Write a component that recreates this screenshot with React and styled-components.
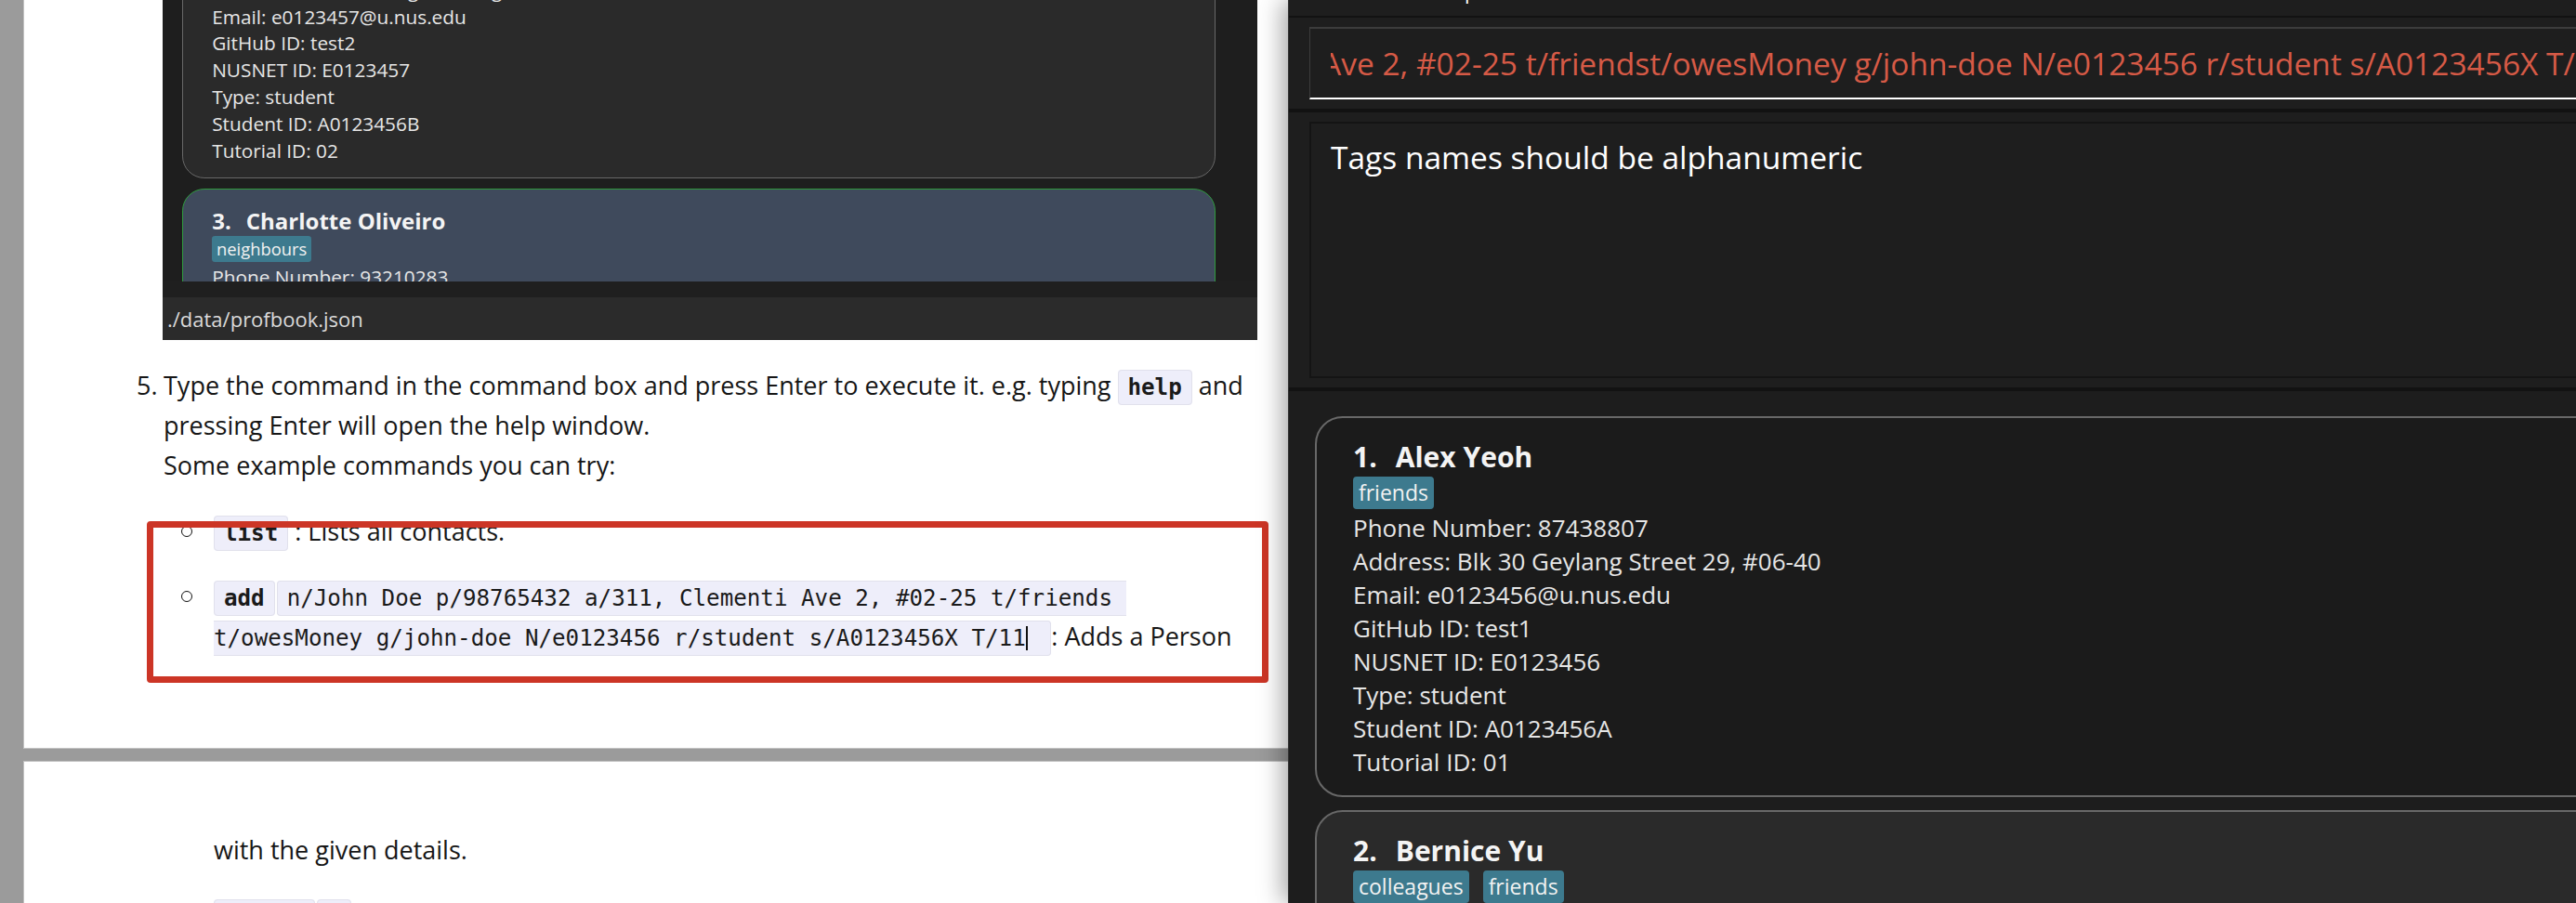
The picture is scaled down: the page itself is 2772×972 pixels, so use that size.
import React from "react";
import styled, { createGlobalStyle } from "styled-components";

const GlobalStyle = createGlobalStyle`
  html, body {
    margin: 0;
    padding: 0;
    overflow: hidden;
  }
  body {
    width: 2772px;
    height: 972px;
    font-family: "Open Sans", "Noto Sans", sans-serif;
  }
`;

const people = [
  { id: 1, name: "Alex Yeoh", tags: ["friends"], phone: "87438807", address: "Blk 30 Geylang Street 29, #06-40", email: "e0123456@u.nus.edu", github: "test1", nusnet: "E0123456", type: "student", studentId: "A0123456A", tutorial: "01" },
  { id: 2, name: "Bernice Yu", tags: ["colleagues", "friends"], phone: "99272758", address: "Blk 30 Lorong 3 Serangoon Gardens, #07-18", email: "e0123457@u.nus.edu", github: "test2", nusnet: "E0123457", type: "student", studentId: "A0123456B", tutorial: "02" },
  { id: 3, name: "Charlotte Oliveiro", tags: ["neighbours"], phone: "93210283", address: "Blk 11 Ang Mo Kio Street 74, #11-04", email: "e0123458@u.nus.edu", github: "test3", nusnet: "E0123458", type: "student", studentId: "A0123456C", tutorial: "03" },
];

/* ---------- desktop ---------- */

const Desktop = styled.div`
  display: flex;
  width: 2772px;
  height: 972px;
  overflow: hidden;
  background: #9b9b9b;
`;

/* ---------- document viewer (left) ---------- */

const Viewer = styled.div`
  flex: 0 0 1386px;
  display: flex;
  flex-direction: column;
  gap: 13px;
  padding-left: 25px;
  box-sizing: border-box;
  overflow: hidden;
`;

const Page = styled.div`
  position: relative;
  flex: none;
  box-sizing: border-box;
  height: ${(p) => p.$height}px;
  background: #ffffff;
  border-left: 1px solid #c2c2c2;
  border-${(p) => p.$edge}: 1px solid #c2c2c2;
  padding: ${(p) => p.$padTop}px 0 0 121px;
  color: #161616;
  font-family: "Open Sans", "Noto Sans", sans-serif;
  font-size: 27px;
  line-height: 43px;
`;

const Step = styled.div`
  display: flex;
  margin-top: ${(p) => p.$gap || 0}px;
`;

const StepNumber = styled.span`
  flex: 0 0 29px;
`;

const StepBody = styled.div`
  flex: 0 0 1178px;
  width: 1178px;
`;

const SubList = styled.ul`
  list-style: none;
  margin: ${(p) => p.$top ?? 28}px 0 0;
  padding: 0;
  display: flex;
  flex-direction: column;
  gap: 27px;
`;

const SubItem = styled.li`
  display: flex;
`;

const Bullet = styled.span`
  flex: 0 0 54px;
  height: 43px;
  display: flex;
  align-items: center;

  &::before {
    content: "";
    display: ${(p) => (p.$hidden ? "none" : "block")};
    width: 10px;
    height: 10px;
    margin-left: 19px;
    border: 1.6px solid #111;
    border-radius: 50%;
  }
`;

const ItemText = styled.div`
  flex: 1;
`;

const Code = styled.code`
  font-family: "DejaVu Sans Mono", "Liberation Mono", monospace;
  font-size: 24.2px;
  line-height: 24px;
  font-weight: ${(p) => (p.$bold ? 700 : 400)};
  color: #1a1a1a;
  background: #eeeefa;
  border: 1px solid #e1e1ec;
  border-radius: 4px;
  padding: 4px 10px;
  margin-left: ${(p) => p.$ml || 0}px;
  white-space: pre-wrap;
`;

const Caret = styled.span`
  display: inline-block;
  width: 0;
  height: 26px;
  border-left: 2px solid #111;
  vertical-align: -5px;
`;

const Annotation = styled.div`
  position: absolute;
  left: 132px;
  top: 561px;
  width: 1207px;
  height: 174px;
  box-sizing: border-box;
  border: 7px solid #cc3526;
  border-radius: 4px;
  pointer-events: none;
`;

/* ---------- embedded screenshot in the doc ---------- */

const Shot = styled.div`
  margin-left: -1px;
  width: 1178px;
  display: flex;
  flex-direction: column;
  background: #1e1e1e;
  font-family: "Open Sans", "Noto Sans", sans-serif;
  line-height: normal;
`;

const ShotList = styled.div`
  height: 303px;
  overflow: hidden;
  padding: 0 45px 0 21px;
  box-sizing: border-box;
`;

const ShotStrip = styled.div`
  height: 17px;
  background: #1f1f1f;
`;

const StatusBar = styled.div`
  height: 46px;
  padding-left: 5px;
  background: #2b2b2b;
  color: #dadada;
  font-size: 22px;
  line-height: 46px;
`;

/* ---------- person cards (shared) ---------- */

const CardList = styled.div`
  display: flex;
  flex-direction: column;
  gap: 0.54em;
  font-size: ${(p) => p.$size}px;
  margin-top: ${(p) => p.$offset || 0}px;
`;

const Card = styled.div`
  flex: none;
  background: ${(p) => (p.$selected ? "#3f4a5c" : p.$alt ? "#2a2a2a" : "#1b1b1b")};
  border: 0.077em solid ${(p) => (p.$selected ? "#2f9a3e" : "#686868")};
  border-radius: 1.15em;
  padding: 0.846em 1.5em 0.69em;
  color: #e6e6e6;
`;

const Name = styled.div`
  display: flex;
  gap: 0.667em;
  font-size: 1.154em;
  font-weight: 700;
  line-height: 1.333;
  color: #f4f4f4;
`;

const Tags = styled.div`
  display: flex;
  gap: 0.58em;
  margin-top: 0.04em;
`;

const Tag = styled.span`
  font-size: 0.885em;
  line-height: 1.32;
  padding: 0.1em 0.26em;
  border-radius: 0.17em;
  background: #3d7a8e;
  color: #f2f2f2;
`;

const Details = styled.div`
  margin-top: 0.077em;
  line-height: 1.385em;
`;

function PersonCard({ person, alt, selected }) {
  const rows = [
    ["Phone Number", person.phone],
    ["Address", person.address],
    ["Email", person.email],
    ["GitHub ID", person.github],
    ["NUSNET ID", person.nusnet],
    ["Type", person.type],
    ["Student ID", person.studentId],
    ["Tutorial ID", person.tutorial],
  ];
  return (
    <Card $alt={alt} $selected={selected}>
      <Name>
        <span>{person.id}.</span>
        <span>{person.name}</span>
      </Name>
      <Tags>
        {person.tags.map((t) => (
          <Tag key={t}>{t}</Tag>
        ))}
      </Tags>
      <Details>
        {rows.map(([label, value]) => (
          <div key={label}>
            {label}: {value}
          </div>
        ))}
      </Details>
    </Card>
  );
}

/* ---------- app window (right) ---------- */

const AppWindow = styled.div`
  position: relative;
  z-index: 1;
  flex: 0 0 1500px;
  display: flex;
  flex-direction: column;
  background: #121212;
  border-left: 1px solid #333333;
  box-shadow: -6px 0 24px rgba(0, 0, 0, 0.35);
  font-family: "Open Sans", "Noto Sans", sans-serif;
`;

const MenuStrip = styled.div`
  flex: none;
  height: 17px;
  overflow: hidden;
  background: #1e1e1e;
`;

const MenuRow = styled.div`
  display: flex;
  gap: 107px;
  margin-top: -21px;
  padding-left: 13px;
  font-size: 22px;
  line-height: 22px;
  color: #ffffff;
`;

const Pane = styled.div`
  flex: ${(p) => (p.$grow ? "1 1 0" : "none")};
  min-height: 0;
  overflow: hidden;
  margin-top: ${(p) => p.$sep}px;
  background: ${(p) => p.$bg || "#1e1e1e"};
  padding: ${(p) => p.$pad};
`;

const CommandBox = styled.div`
  height: 78px;
  box-sizing: border-box;
  display: flex;
  align-items: center;
  padding-left: 22px;
  border-top: 2px solid #3c3c3c;
  border-left: 1px solid #3c3c3c;
  border-bottom: 2px solid #ffffff;
  background: #1e1e1e;
`;

const CommandClip = styled.div`
  flex: 1;
  overflow: hidden;
  white-space: nowrap;
`;

const CommandText = styled.span`
  display: inline-block;
  margin-left: -10px;
  color: #d65a46;
  font-size: 33.5px;
  line-height: 45px;
`;

const ResultBox = styled.div`
  height: 276px;
  box-sizing: border-box;
  padding: 14px 21px;
  border: 2px solid #141414;
  background: #1e1e1e;
  color: #ffffff;
  font-size: 33.5px;
  line-height: 45px;
`;

export default function App() {
  return (
    <>
      <GlobalStyle />
      <Desktop>
        <Viewer>
          <Page $height={806} $edge="bottom" $padTop={0}>
            <Step>
              <StepNumber />
              <StepBody>
                <Shot>
                  <ShotList>
                    <CardList $size={20.8} $offset={-135}>
                      <PersonCard person={people[1]} alt />
                      <PersonCard person={people[2]} selected />
                    </CardList>
                  </ShotList>
                  <ShotStrip />
                  <StatusBar>./data/profbook.json</StatusBar>
                </Shot>
              </StepBody>
            </Step>

            <Step $gap={27}>
              <StepNumber>5.</StepNumber>
              <StepBody>
                Type the command in the command box and press Enter to execute it. e.g. typing{" "}
                <Code $bold>help</Code> and pressing Enter will open the help window.
                <br />
                Some example commands you can try:
                <SubList>
                  <SubItem>
                    <Bullet />
                    <ItemText>
                      <Code $bold>list</Code> : Lists all contacts.
                    </ItemText>
                  </SubItem>
                  <SubItem>
                    <Bullet />
                    <ItemText>
                      <Code $bold>add</Code>
                      <Code $ml={2}>
                        n/John Doe p/98765432 a/311, Clementi Ave 2, #02-25 t/friends t/owesMoney g/john-doe N/e0123456 r/student s/A0123456X T/11
                        <Caret />{" "}
                      </Code>
                      : Adds a Person
                    </ItemText>
                  </SubItem>
                </SubList>
              </StepBody>
            </Step>
            <Annotation />
          </Page>

          <Page $height={400} $edge="top" $padTop={73}>
            <Step>
              <StepNumber />
              <StepBody>
                <SubList $top={0}>
                  <SubItem>
                    <Bullet $hidden />
                    <ItemText>with the given details.</ItemText>
                  </SubItem>
                  <SubItem>
                    <Bullet />
                    <ItemText>
                      <Code $bold>delete</Code>
                      <Code $ml={2}>3</Code> : Deletes the 3rd contact shown in the current list.
                    </ItemText>
                  </SubItem>
                </SubList>
              </StepBody>
            </Step>
          </Page>
        </Viewer>

        <AppWindow>
          <MenuStrip>
            <MenuRow>
              <span>File</span>
              <span>Help</span>
            </MenuRow>
          </MenuStrip>

          <Pane $sep={2} $pad="10px 0 10px 22px">
            <CommandBox>
              <CommandClip>
                <CommandText>
                  Ave 2, #02-25 t/friendst/owesMoney g/john-doe N/e0123456 r/student s/A0123456X T/11
                </CommandText>
              </CommandClip>
            </CommandBox>
          </Pane>

          <Pane $sep={4} $pad="10px 0 10px 22px">
            <ResultBox>Tags names should be alphanumeric</ResultBox>
          </Pane>

          <Pane $sep={4} $pad="27px 40px 0 28px" $bg="#1d1d1d" $grow>
            <CardList $size={26}>
              <PersonCard person={people[0]} />
              <PersonCard person={people[1]} alt />
              <PersonCard person={people[2]} />
            </CardList>
          </Pane>
        </AppWindow>
      </Desktop>
    </>
  );
}
